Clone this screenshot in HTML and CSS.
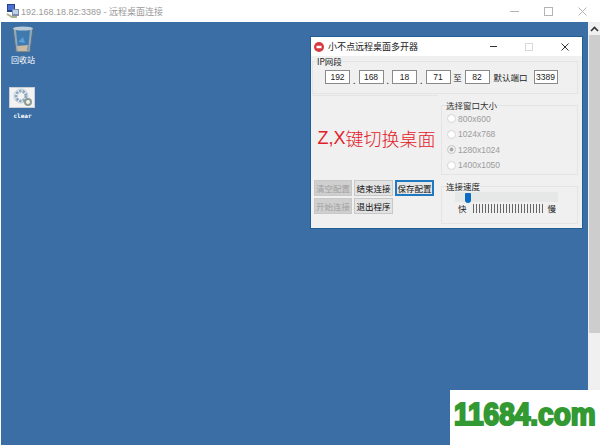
FILE: index.html
```html
<!DOCTYPE html>
<html lang="zh-CN">
<head>
    <meta charset="UTF-8">
    <meta name="viewport" content="width=device-width, initial-scale=1.0">
    <title>远程桌面连接</title>
    <link rel="stylesheet" href="styles.css">
</head>
<body>
<div id="rdp">
    <div id="titlebar">
        <svg class="rdp-icon" width="14" height="14" viewBox="0 0 14 14">
            <rect x="1" y="0" width="8" height="8" fill="#27408f"/>
            <rect x="2" y="1" width="6" height="5" fill="#4a6fd0"/>
            <rect x="6" y="5" width="7" height="7" fill="#7f8da8"/>
            <rect x="7" y="6" width="5" height="4" fill="#b9d3ec"/>
            <path d="M1 10l5 3h5" stroke="#a9b48c" stroke-width="2" fill="none"/>
        </svg>
        <span class="rdp-title">192.168.18.82:3389 - 远程桌面连接</span>
        <div class="winbtns">
            <span class="wb-min"></span>
            <span class="wb-max"></span>
            <svg class="wb-close" width="9" height="9" viewBox="0 0 9 9"><path d="M0.5 0.5l8 8M8.5 0.5l-8 8" stroke="#b4b4b4" stroke-width="1"/></svg>
        </div>
    </div>

    <div id="body">
        <div id="desktop">
            <div class="deskicon bin">
                <svg width="22" height="27" viewBox="0 0 22 27">
                    <path d="M1 2l20 0-3 24-14 0z" fill="#8fa9bd" stroke="#5a6f80" stroke-width="1"/>
                    <path d="M4 4l14 0-2 20-10 0z" fill="#3f79ad"/>
                    <path d="M5 20l11-1-1 6-9 0z" fill="#cbb9a0"/>
                    <path d="M6 16l5-5 2 6z" fill="#5aa0d8"/>
                    <ellipse cx="11" cy="2.5" rx="10" ry="2" fill="#b9c9d6"/>
                </svg>
                <span class="bin-label">回收站</span>
            </div>
            <div class="deskicon clear">
                <svg width="26" height="21" viewBox="0 0 26 21">
                    <rect x="0.5" y="0.5" width="25" height="20" fill="#f2f2f2" stroke="#c9ced3"/>
                    <circle cx="12" cy="9" r="5" fill="none" stroke="#8fa9c2" stroke-width="3" stroke-dasharray="2.5 1"/>
                    <circle cx="12" cy="9" r="7" fill="none" stroke="#c3d0dc" stroke-width="1"/>
                    <circle cx="19" cy="15" r="3" fill="none" stroke="#8d9e90" stroke-width="2"/>
                </svg>
                <span class="clear-label">clear</span>
            </div>

            <div id="dialog">
                <div class="dlg-title">
                    <svg width="10" height="10" viewBox="0 0 12 12">
                        <circle cx="6" cy="6" r="6" fill="#d8383f"/>
                        <rect x="3" y="4.5" width="6" height="3" fill="#fff"/>
                    </svg>
                    <span class="dlg-name">小不点远程桌面多开器</span>
                    <div class="dlg-btns">
                        <span class="dlg-min"></span>
                        <span class="dlg-max"></span>
                        <svg width="8" height="8" viewBox="0 0 8 8"><path d="M0.5 0.5l7 7M7.5 0.5l-7 7" stroke="#333" stroke-width="1"/></svg>
                    </div>
                </div>

                <fieldset class="group ipgroup">
                    <legend>IP网段</legend>
                    <div class="iprow">
                        <span class="field">192</span><span class="dot">.</span>
                        <span class="field">168</span><span class="dot">.</span>
                        <span class="field">18</span><span class="dot">.</span>
                        <span class="field">71</span>
                        <span class="to">至</span>
                        <span class="field">82</span>
                        <span class="port-label">默认端口</span>
                        <span class="field port">3389</span>
                    </div>
                </fieldset>

                <div class="lower">
                    <div class="leftcol">
                        <div class="slogan"><span class="latin">Z,X</span>键切换桌面</div>
                        <div class="btngrid">
                            <button class="btn off">清空配置</button>
                            <button class="btn">结束连接</button>
                            <button class="btn focus">保存配置</button>
                            <button class="btn off">开始连接</button>
                            <button class="btn">退出程序</button>
                        </div>
                    </div>
                    <div class="rightcol">
                        <fieldset class="group sizegroup">
                            <legend>选择窗口大小</legend>
                            <div class="radio"><i></i>800x600</div>
                            <div class="radio"><i></i>1024x768</div>
                            <div class="radio on"><i></i>1280x1024</div>
                            <div class="radio"><i></i>1400x1050</div>
                        </fieldset>
                        <fieldset class="group speedgroup">
                            <legend>连接速度</legend>
                            <div class="track"><span class="thumb"></span></div>
                            <div class="ticks">
                                <span>快</span>
                                <div class="ticklines"></div>
                                <span>慢</span>
                            </div>
                        </fieldset>
                    </div>
                </div>
            </div>
        </div>
        <div id="scrollbar">
            <svg class="arrow" width="9" height="6" viewBox="0 0 9 6"><path d="M1 5l3.5-3.5L8 5" stroke="#333" stroke-width="1.6" fill="none"/></svg>
            <div class="scrollthumb"></div>
        </div>
    </div>
</div>
<div id="watermark"><span class="wm-text">11684.com</span></div>
</body>
</html>
```

FILE: styles.css
```css
html, body {
    margin: 0;
    padding: 0;
    background: #fff;
}
body {
    width: 600px;
    height: 445px;
    overflow: hidden;
    position: relative;
    font-family: "Noto Sans CJK SC", "Liberation Sans", sans-serif;
}
#rdp {
    display: flex;
    flex-direction: column;
    height: 445px;
}

/* outer window bar */
#titlebar {
    display: flex;
    align-items: center;
    height: 22px;
    padding-left: 6px;
    flex: none;
}
.rdp-icon {
    margin-right: 1px;
}
.rdp-title {
    font-size: 9px;
    color: #9a9a9a;
    white-space: nowrap;
    font-family: "Liberation Sans", "Noto Sans CJK SC", sans-serif;
}
.winbtns {
    margin-left: auto;
    display: flex;
    align-items: center;
    gap: 25px;
    padding-right: 13px;
}
.wb-min {
    width: 9px;
    height: 1px;
    background: #b4b4b4;
}
.wb-max {
    width: 7px;
    height: 7px;
    border: 1px solid #b4b4b4;
}

#body {
    flex: 1;
    display: flex;
}
#desktop {
    flex: 1;
    margin-left: 1px;
    position: relative;
    background: #3a6ea5;
}

/* desktop icons sit on a free canvas */
.deskicon {
    position: absolute;
    display: flex;
    flex-direction: column;
    align-items: center;
    color: #fff;
    white-space: nowrap;
}
.bin {
    left: 11px;
    top: 4px;
    width: 22px;
}
.bin-label {
    font-size: 8px;
    line-height: 10px;
    margin-top: 2px;
}
.clear {
    left: 8px;
    top: 65px;
    width: 26px;
}
.clear-label {
    font-family: "DejaVu Sans Mono", monospace;
    font-weight: bold;
    font-size: 6px;
    line-height: 8px;
    margin-top: 4px;
    padding-left: 1px;
}

#dialog {
    position: absolute;
    left: 309px;
    top: 14px;
    width: 271px;
    height: 191px;
    border: 1px solid #1f5f96;
    background: #f0f0f0;
    display: flex;
    flex-direction: column;
    font-size: 8.5px;
    color: #222;
}
.dlg-title {
    display: flex;
    align-items: center;
    height: 19px;
    padding-left: 3px;
    background: #fff;
    flex: none;
}
.dlg-name {
    margin-left: 4px;
    font-size: 9px;
}
.dlg-btns {
    margin-left: auto;
    display: flex;
    align-items: center;
    gap: 28px;
    padding-right: 13px;
}
.dlg-min {
    width: 7px;
    height: 1px;
    background: #333;
}
.dlg-max {
    width: 6px;
    height: 6px;
    border: 1px solid #d8d8d8;
}

.group {
    margin: 0;
    padding: 0;
    border: 1px solid #e4e4e4;
    min-width: 0;
}
.group legend {
    padding: 0;
    font-size: 8.5px;
    line-height: 11px;
}
.ipgroup {
    margin: 0 4px 0 1px;
    height: 38px;
    box-sizing: border-box;
}
.ipgroup legend {
    margin-left: 4px;
}
.iprow {
    display: flex;
    align-items: center;
    padding: 1px 0 0 12px;
}
.field {
    box-sizing: border-box;
    width: 25px;
    height: 14px;
    border: 1px solid #8a8a8a;
    background: #fff;
    text-align: center;
    line-height: 12px;
    font-family: "Liberation Sans", sans-serif;
    font-size: 8.5px;
}
.dot {
    width: 8.5px;
    text-align: center;
    line-height: 12px;
    padding-top: 6px;
}
.to {
    width: 14px;
    text-align: center;
}
.port-label {
    margin: 0 6px 0 4px;
}
.port {
    width: 24px;
}

.lower {
    flex: 1;
    display: flex;
    margin: 1px 4px 0 1px;
    gap: 3px;
}
.leftcol {
    width: 126px;
    border-top: 1px solid #e4e4e4;
}
.slogan {
    height: 84px;
    display: flex;
    align-items: center;
    justify-content: center;
    padding: 0 0 0 3px;
    color: #e3202a;
    font-size: 18px;
    font-weight: 300;
    white-space: nowrap;
}
.latin {
    font-family: "Liberation Sans", sans-serif;
    font-weight: normal;
}
.btngrid {
    display: grid;
    grid-template-columns: 38px 39px 39px;
    grid-auto-rows: 16px;
    gap: 2px;
    padding-left: 2px;
}
.btn {
    padding: 0;
    margin: 0;
    border: 1px solid #c8c8c8;
    background: #e3e3e3;
    font-family: inherit;
    font-size: 8.5px;
    color: #111;
    white-space: nowrap;
}
.btn.off {
    background: #cfcfcf;
    color: #a0a0a0;
}
.btn.focus {
    border: 2px solid #1f79c0;
    background: #e6e6e6;
}

.rightcol {
    flex: 1;
    display: flex;
    flex-direction: column;
    padding-top: 5px;
}
.sizegroup {
    height: 75px;
    box-sizing: border-box;
    padding-left: 5px;
    flex: none;
}
.sizegroup legend {
    margin-left: -1px;
    color: #333;
}
.radio {
    display: flex;
    align-items: center;
    height: 15.5px;
    color: #9c9c9c;
    font-family: "Liberation Sans", sans-serif;
    font-size: 8.5px;
}
.radio i {
    box-sizing: border-box;
    width: 9px;
    height: 9px;
    margin-right: 2px;
    border-radius: 50%;
    background: #fff;
    border: 1px solid #d4d4d4;
}
.radio.on i {
    background: #a8a8a8;
    box-shadow: inset 0 0 0 1.5px #f4f4f4;
}
.speedgroup {
    margin-top: 6px;
    height: 43px;
    box-sizing: border-box;
}
.speedgroup legend {
    margin-left: 4px;
}
.track {
    margin: 0 19px 0 13px;
    height: 10px;
    background: #e6e8e8;
    position: relative;
}
.thumb {
    position: absolute;
    left: 10px;
    top: 1px;
    width: 6px;
    height: 10px;
    background: #0a6cc4;
    border-radius: 1px 1px 3px 3px;
}
.ticks {
    display: flex;
    align-items: center;
    height: 12px;
    padding-left: 16px;
}
.ticklines {
    width: 72px;
    height: 9px;
    margin: 0 3px 0 6px;
    background: repeating-linear-gradient(to right, #666 0, #666 1px, transparent 1px, transparent 3px);
}

/* outer scrollbar */
#scrollbar {
    width: 12px;
    flex: none;
    background: #f0f0f0;
    display: flex;
    flex-direction: column;
    align-items: center;
}
.arrow {
    margin: 4px 0 3px;
}
.scrollthumb {
    width: 11px;
    height: 298px;
    background: #cdcdcd;
}

#watermark {
    position: absolute;
    left: 450px;
    top: 390px;
    width: 150px;
    height: 55px;
    box-sizing: border-box;
    padding: 10px 0 0 4px;
    background: #fff;
    white-space: nowrap;
}
.wm-text {
    display: inline-block;
    color: #339933;
    font-family: "Liberation Sans", sans-serif;
    font-weight: bold;
    font-size: 28px;
    line-height: 30px;
    -webkit-text-stroke: 2px #339933;
    transform: scaleY(1.1);
}
```
